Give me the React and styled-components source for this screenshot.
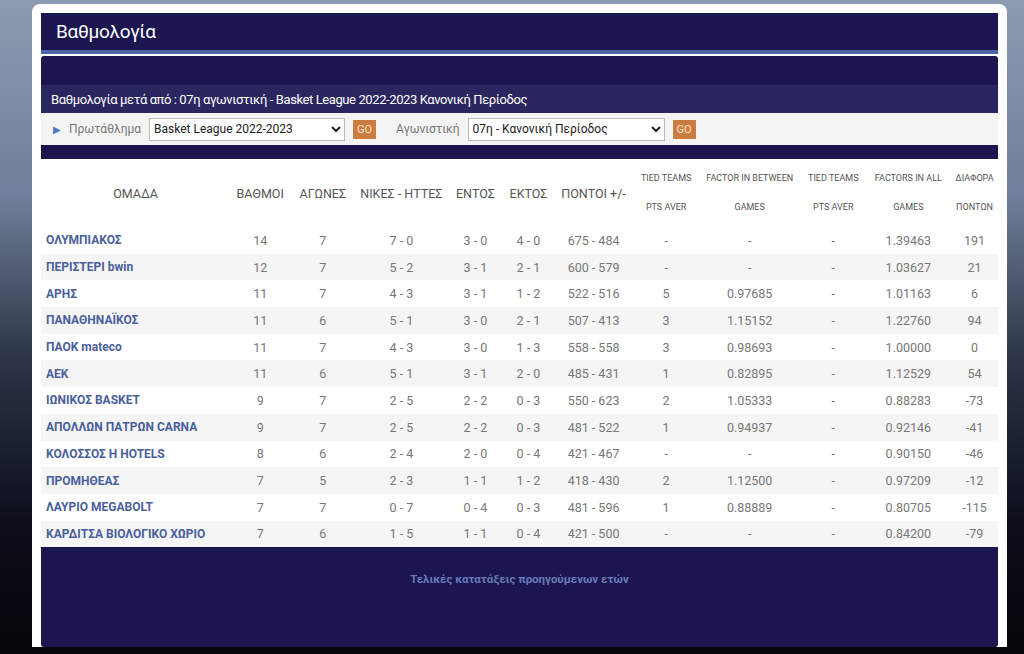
import React from "react";
import styled, { createGlobalStyle } from "styled-components";

const Global = createGlobalStyle`
  body {
    margin: 0;
    font-family: Roboto, "Noto Sans", sans-serif;
    background: linear-gradient(180deg, #8d9bb2 0%, #6f7f99 30%, #2c3446 55%, #0c0f1a 80%, #05060b 100%);
    height: 654px;
    overflow: hidden;
  }
`;

const Page = styled.div`
  padding: 4px 17px 0 32px;
`;

const Card = styled.div`
  background: #fff;
  border-radius: 8px 8px 0 0;
  padding: 9px 9px 7px 9px;
  height: 643px;
  box-sizing: border-box;
`;

const Header = styled.div`
  background: #1b1650;
  color: #fff;
  height: 37px;
  display: flex;
  align-items: center;
  padding-left: 15px;
  font-size: 19px;
  letter-spacing: -0.3px;
  border-bottom: 4px solid #4e64a8;
`;

const Band = styled.div`
  margin-top: 2px;
  background: #1b1650;
  border-radius: 3px 3px 0 0;
  height: 57px;
  display: flex;
  align-items: flex-end;
`;

const SubTitle = styled.div`
  width: 100%;
  background: #2a2660;
  color: #fff;
  font-size: 13px;
  letter-spacing: -0.4px;
  padding: 0 0 6px 10px;
  height: 28px;
  display: flex;
  align-items: flex-end;
  box-sizing: border-box;
`;

const Filters = styled.div`
  background: #f4f4f4;
  height: 32px;
  display: flex;
  align-items: center;
  padding-left: 12px;
  font-size: 12px;
  color: #777;
  gap: 8px;
`;

const Arrow = styled.span`
  color: #4e79c4;
  font-size: 10px;
`;

const Select = styled.select`
  width: ${(p) => p.w}px;
  height: 23px;
  font-family: Roboto, sans-serif;
  font-size: 12px;
  color: #222;
  border: 1px solid #bbb;
  background: #fff;
`;

const Go = styled.span`
  background: #cd7c3f;
  color: #fbe3cf;
  font-size: 11px;
  padding: 3px 4px;
  margin-right: ${(p) => p.mr || 0}px;
`;

const Strip = styled.div`
  background: #1b1650;
  height: 14px;
`;

const Table = styled.table`
  width: 100%;
  border-collapse: collapse;
  font-size: 12.5px;
  color: #777;
  table-layout: fixed;
`;

const Th = styled.th`
  font-weight: 400;
  font-size: ${(p) => (p.small ? 9 : 12.5)}px;
  line-height: ${(p) => (p.small ? "29px" : "normal")};
  color: #555;
  height: 66px;
  text-align: center;
`;

const Tr = styled.tr`
  background: ${(p) => (p.alt ? "#f5f5f5" : "#fff")};
  height: 26.7px;
`;

const Td = styled.td`
  text-align: center;
  padding: 0;
`;

const Team = styled.td`
  padding-left: 5px;
  color: #4a5f9c;
  font-weight: 700;
  font-size: 12px;
`;

const Footer = styled.div`
  background: #1b1650;
  height: 100px;
  border-radius: 0 0 3px 3px;
  color: #6a7ab8;
  font-weight: 700;
  font-size: 11.5px;
  text-align: center;
  padding-top: 25px;
  box-sizing: border-box;
`;

const widths = [189, 60, 65, 92, 56, 50, 80, 65, 102, 65, 85, 47];

const rows = [
  ["ΟΛΥΜΠΙΑΚΟΣ", 14, 7, "7 - 0", "3 - 0", "4 - 0", "675 - 484", "-", "-", "-", "1.39463", "191"],
  ["ΠΕΡΙΣΤΕΡΙ bwin", 12, 7, "5 - 2", "3 - 1", "2 - 1", "600 - 579", "-", "-", "-", "1.03627", "21"],
  ["ΑΡΗΣ", 11, 7, "4 - 3", "3 - 1", "1 - 2", "522 - 516", "5", "0.97685", "-", "1.01163", "6"],
  ["ΠΑΝΑΘΗΝΑΪΚΟΣ", 11, 6, "5 - 1", "3 - 0", "2 - 1", "507 - 413", "3", "1.15152", "-", "1.22760", "94"],
  ["ΠΑΟΚ mateco", 11, 7, "4 - 3", "3 - 0", "1 - 3", "558 - 558", "3", "0.98693", "-", "1.00000", "0"],
  ["ΑΕΚ", 11, 6, "5 - 1", "3 - 1", "2 - 0", "485 - 431", "1", "0.82895", "-", "1.12529", "54"],
  ["ΙΩΝΙΚΟΣ BASKET", 9, 7, "2 - 5", "2 - 2", "0 - 3", "550 - 623", "2", "1.05333", "-", "0.88283", "-73"],
  ["ΑΠΟΛΛΩΝ ΠΑΤΡΩΝ CARNA", 9, 7, "2 - 5", "2 - 2", "0 - 3", "481 - 522", "1", "0.94937", "-", "0.92146", "-41"],
  ["ΚΟΛΟΣΣΟΣ Η HOTELS", 8, 6, "2 - 4", "2 - 0", "0 - 4", "421 - 467", "-", "-", "-", "0.90150", "-46"],
  ["ΠΡΟΜΗΘΕΑΣ", 7, 5, "2 - 3", "1 - 1", "1 - 2", "418 - 430", "2", "1.12500", "-", "0.97209", "-12"],
  ["ΛΑΥΡΙΟ MEGABOLT", 7, 7, "0 - 7", "0 - 4", "0 - 3", "481 - 596", "1", "0.88889", "-", "0.80705", "-115"],
  ["ΚΑΡΔΙΤΣΑ ΒΙΟΛΟΓΙΚΟ ΧΩΡΙΟ", 7, 6, "1 - 5", "1 - 1", "0 - 4", "421 - 500", "-", "-", "-", "0.84200", "-79"],
];

export default function App() {
  return (
    <Page>
      <Global />
      <Card>
        <Header>Βαθμολογία</Header>
        <Band>
          <SubTitle>Βαθμολογία μετά από : 07η αγωνιστική - Basket League 2022-2023 Κανονική Περίοδος</SubTitle>
        </Band>
        <Filters>
          <Arrow>▶</Arrow>
          <span>Πρωτάθλημα</span>
          <Select w={196}><option>Basket League 2022-2023</option></Select>
          <Go mr={12}>GO</Go>
          <span>Αγωνιστική</span>
          <Select w={197}><option>07η - Κανονική Περίοδος</option></Select>
          <Go>GO</Go>
        </Filters>
        <Strip />
        <Table>
          <colgroup>
            {widths.map((w, i) => <col key={i} style={{ width: w }} />)}
          </colgroup>
          <thead>
            <tr>
              <Th>ΟΜΑΔΑ</Th>
              <Th>ΒΑΘΜΟΙ</Th>
              <Th>ΑΓΩΝΕΣ</Th>
              <Th>ΝΙΚΕΣ - ΗΤΤΕΣ</Th>
              <Th>ΕΝΤΟΣ</Th>
              <Th>ΕΚΤΟΣ</Th>
              <Th>ΠΟΝΤΟΙ +/-</Th>
              <Th small>TIED TEAMS<br />PTS AVER</Th>
              <Th small>FACTOR IN BETWEEN<br />GAMES</Th>
              <Th small>TIED TEAMS<br />PTS AVER</Th>
              <Th small>FACTORS IN ALL<br />GAMES</Th>
              <Th small>ΔΙΑΦΟΡΑ<br />ΠΟΝΤΩΝ</Th>
            </tr>
          </thead>
          <tbody>
            {rows.map((r, i) => (
              <Tr key={r[0]} alt={i % 2 === 1}>
                <Team>{r[0]}</Team>
                {r.slice(1).map((c, j) => <Td key={j}>{c}</Td>)}
              </Tr>
            ))}
          </tbody>
        </Table>
        <Footer>Τελικές κατατάξεις προηγούμενων ετών</Footer>
      </Card>
    </Page>
  );
}
